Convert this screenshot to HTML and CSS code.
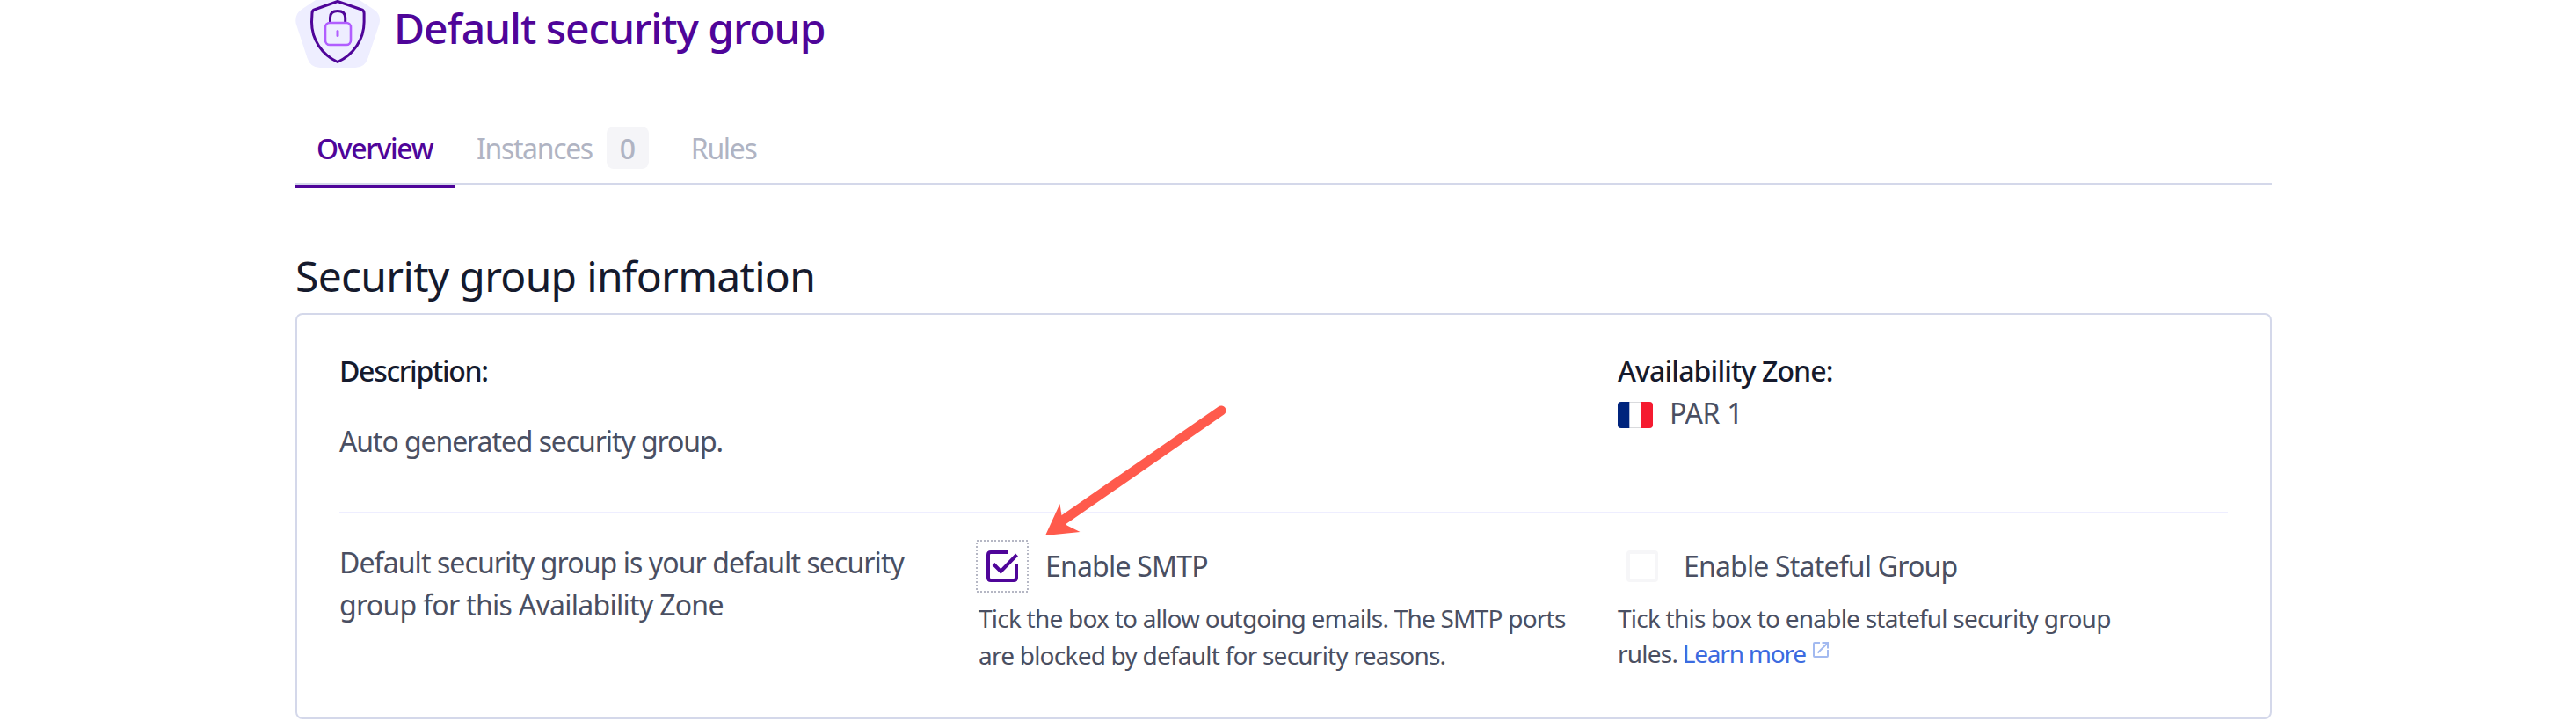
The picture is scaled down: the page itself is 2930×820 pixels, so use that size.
FILE: index.html
```html
<!DOCTYPE html>
<html lang="en">
<head>
<meta charset="utf-8">
<title>Default security group</title>
<link rel="stylesheet" href="styles.css">
</head>
<body>
<main class="page">
  <header class="header">
    <svg class="header-icon" width="96" height="78" viewBox="0 0 96 78" fill="none">
      <path fill="#eeeeff" d="M23 0H73L88 10Q98 16 95.500 27L82.500 66Q79 77 68 77H28Q17 77 13.500 66L.7 27Q-1.500 16 8 10Z"/>
      <path stroke="#4f0599" stroke-width="3" stroke-linejoin="round" d="M48 1.500L75.500 11Q78 12 78.100 15V25C78.100 45 66 62 48 70.500C30 62 18.500 45 18.500 25L19 15Q19 12 21.500 11Z"/>
      <path stroke="#4f0599" stroke-width="3" d="M39.500 25V20Q39.500 12.500 48 12.500Q56.700 12.500 56.700 20V25"/>
      <rect x="34" y="26" width="29" height="25" rx="5" stroke="#b15eff" stroke-width="2.600"/>
      <path stroke="#b15eff" stroke-width="3" stroke-linecap="round" d="M48 35.500V40.500"/>
    </svg>
    <h1 class="title">Default security group</h1>
  </header>

  <nav class="tabs">
    <a class="tab tab-active"><span class="tab-label">Overview</span></a>
    <a class="tab"><span class="tab-label">Instances</span><span class="badge">0</span></a>
    <a class="tab"><span class="tab-label">Rules</span></a>
  </nav>

  <h2 class="section-title">Security group information</h2>

  <section class="card">
    <div class="row row-top">
      <div class="col">
        <div class="label">Description:</div>
        <p class="description">Auto generated security group.</p>
      </div>
      <div class="col"></div>
      <div class="col">
        <div class="label label-zone">Availability Zone:</div>
        <div class="zone">
          <svg width="40" height="30" viewBox="0 0 40 30">
            <rect x=".5" y=".5" width="39" height="29" rx="3" fill="#fff" stroke="#d9dadd"/>
            <path fill="#00247d" d="M13.300 0H4Q0 0 0 4V26Q0 30 4 30H13.300Z"/>
            <path fill="#f51b30" d="M26.700 0H36Q40 0 40 4V26Q40 30 36 30H26.700Z"/>
          </svg>
          <span class="zone-name">PAR 1</span>
        </div>
      </div>
    </div>
    <div class="row row-bottom">
      <div class="col">
        <p class="about">Default security group is your default security<br><span class="about-zone">group for this Availability Zone</span></p>
      </div>
      <div class="col">
        <div class="option">
          <span class="check">
            <svg width="60" height="60" viewBox="0 0 60 60" fill="none">
              <rect x="1" y="1" width="58" height="58" stroke="#b5b7c4" stroke-width="2" stroke-dasharray="2 2"/>
              <path stroke="#4f0599" stroke-width="4" d="M36 14H17Q14 14 14 17V43Q14 46 17 46H43Q46 46 46 43V28"/>
              <path stroke="#4f0599" stroke-width="4" d="M20 27.500L28.300 35.800L46.500 17"/>
            </svg>
          </span>
          <span class="option-name option-smtp">Enable SMTP</span>
        </div>
        <p class="hint hint-smtp">Tick the box to allow outgoing emails. The SMTP ports<br>are blocked by default for security reasons.</p>
      </div>
      <div class="col">
        <div class="option">
          <span class="check">
            <svg width="60" height="60" viewBox="0 0 60 60" fill="none">
              <rect x="14" y="14" width="32" height="32" rx="2" stroke="#f6f6f8" stroke-width="4"/>
            </svg>
          </span>
          <span class="option-name">Enable Stateful Group</span>
        </div>
        <p class="hint hint-stateful">Tick this box to enable stateful security group<br>rules. <a class="link">Learn more<svg class="link-icon" width="18" height="18" viewBox="0 0 18 18" fill="none" stroke="#a3baf0" stroke-width="2"><path d="M8 1H2Q1 1 1 2V16Q1 17 2 17H16Q17 17 17 16V9M10.500 1H17V7.500M16.500 1.500L5.500 12.500"/></svg></a></p>
      </div>
    </div>
    <svg class="arrow" width="210" height="152" viewBox="0 0 210 152">
      <path stroke="#ff5a4c" stroke-width="11" stroke-linecap="round" d="M201 9L22 133"/>
      <path fill="#ff5a4c" d="M1 151L17.500 115L20 131.500L25.500 139.500L40.500 147Z"/>
    </svg>
  </section>
</main>
</body>
</html>
```
FILE: styles.css
```css
* { box-sizing: border-box; }

body {
  margin: 0;
  background: #fff;
  color: #4a4f62;
  font: 400 32px/48px "Noto Sans", sans-serif;
  letter-spacing: -0.9px;
  overflow: hidden;
}

h1, h2, p { margin: 0; }

.page { width: 2248px; margin-left: 336px; }

.header { display: flex; gap: 16px; height: 132px; }
.header-icon { flex: none; }
.title {
  padding-top: 2px;
  color: #4f0599;
  font-size: 48px;
  font-weight: 500;
  line-height: 60px;
  letter-spacing: -1.05px;
}

.tabs {
  display: flex;
  height: 78px;
  border-bottom: 2px solid #d4d8ea;
}
.tab {
  display: flex;
  gap: 16px;
  height: 82px;
  padding: 12px 24px 0;
  color: #b0b4c3;
  letter-spacing: -1.35px;
}
.tab-label { padding-top: 1px; }
.tab-active {
  width: 182px;
  border-bottom: 4px solid #4f0599;
  color: #4f0599;
  font-weight: 500;
}
.badge {
  width: 48px;
  height: 48px;
  border-radius: 8px;
  background: #f5f5f8;
  font-weight: 500;
  line-height: 50px;
  letter-spacing: 0;
  text-align: center;
}

.section-title {
  margin-top: 74px;
  height: 72px;
  color: #151a2d;
  font-size: 48px;
  font-weight: 400;
  line-height: 60px;
  letter-spacing: -0.7px;
}

.card {
  position: relative;
  height: 462px;
  padding: 40px 48px 0;
  border: 2px solid #d4d8ea;
  border-radius: 8px;
}
.row { display: grid; grid-template-columns: 726px 728px 1fr; white-space: nowrap; }
.row-top { height: 186px; border-bottom: 2px solid #eeeeff; }
.row-bottom { padding-top: 30px; }

.label { color: #151a2d; font-weight: 500; letter-spacing: -1.3px; }
.label-zone { letter-spacing: -0.85px; }
.description { margin-top: 32px; letter-spacing: -1.1px; }

.zone { display: flex; align-items: flex-start; gap: 19px; }
.zone svg { margin-top: 11px; }
.zone-name { letter-spacing: -0.3px; }

.about { padding-top: 2px; letter-spacing: -0.92px; }
.about-zone { letter-spacing: -0.72px; }

.option { display: flex; align-items: center; gap: 17px; height: 60px; }
.check { display: flex; margin-left: -2px; }
.option-name { letter-spacing: -0.82px; }
.option-smtp { margin-left: 2px; letter-spacing: -0.8px; }

.hint {
  margin-top: 8px;
  font-size: 28px;
  line-height: 42px;
  letter-spacing: -0.77px;
}
.hint-smtp { padding-left: 1px; }
.hint-stateful { margin-top: 9px; line-height: 40px; }
.link { margin-left: -1px; color: #3c6be0; letter-spacing: -1.2px; }
.link-icon { margin-left: 8px; vertical-align: 6px; }

.arrow { position: absolute; left: 850px; top: 100px; }
```
